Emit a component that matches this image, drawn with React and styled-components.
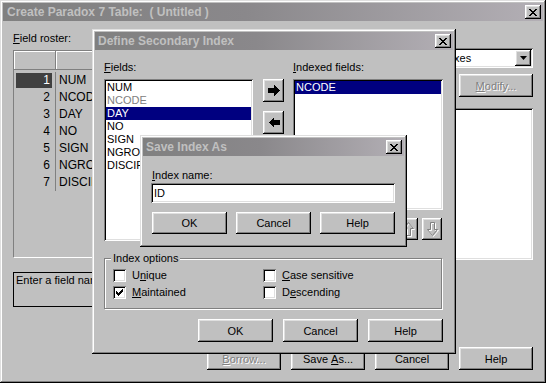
import React from "react";
import styled, { createGlobalStyle, css } from "styled-components";

const GlobalStyle = createGlobalStyle`
  html, body { margin: 0; padding: 0; background: #c0c0c0; }
  body {
    font-family: "Liberation Sans", Arial, sans-serif;
    font-size: 11px;
    color: #000;
  }
  *, *::before, *::after { box-sizing: border-box; }
`;

const frame = css`
  box-shadow: inset -1px -1px #000, inset 1px 1px #dfdfdf,
    inset -2px -2px #808080, inset 2px 2px #fff;
`;

const raised = css`
  box-shadow: inset -1px -1px #000, inset 1px 1px #fff,
    inset -2px -2px #808080, inset 2px 2px #dfdfdf;
`;

const sunken = css`
  box-shadow: inset 1px 1px #808080, inset -1px -1px #fff,
    inset 2px 2px #000, inset -2px -2px #dfdfdf;
`;

const Window = styled.div`
  position: ${({ $x }) => ($x === undefined ? "relative" : "absolute")};
  left: ${({ $x }) => $x ?? 0}px;
  top: ${({ $y }) => $y ?? 0}px;
  width: ${({ $w }) => $w}px;
  height: ${({ $h }) => $h}px;
  padding: 3px;
  display: flex;
  flex-direction: column;
  background: #c0c0c0;
  ${frame}
`;

const TitleBar = styled.div`
  flex: none;
  height: 18px;
  display: flex;
  align-items: center;
  padding: 0 2px 0 ${({ $pl }) => $pl ?? 3}px;
  background: linear-gradient(to right, #808080 0%, #8a888b 45%, #b3afb5 100%);
  color: #c0c0c0;
  font-size: 12px;
  font-weight: bold;
`;

const TitleText = styled.span`
  flex: 1;
  white-space: pre;
  overflow: hidden;
`;

const CloseButton = styled.div`
  width: 16px;
  height: 14px;
  display: flex;
  align-items: center;
  justify-content: center;
  background: #c0c0c0;
  ${raised}
`;

const Body = styled.div`
  flex: 1;
  display: flex;
  flex-direction: column;
  padding: ${({ $pad }) => $pad};
  min-height: 0;
`;

const Label = styled.div`
  height: 13px;
  line-height: 13px;
  white-space: nowrap;
  padding-left: ${({ $pl }) => $pl ?? 0}px;
`;

const ButtonFace = styled.div`
  flex: none;
  width: ${({ $w }) => $w ?? 75}px;
  height: ${({ $h }) => $h ?? 23}px;
  margin-top: ${({ $mt }) => $mt ?? 0}px;
  align-self: ${({ $end }) => ($end ? "flex-end" : "auto")};
  display: flex;
  align-items: center;
  justify-content: center;
  background: #c0c0c0;
  color: ${({ $disabled }) => ($disabled ? "#808080" : "#000")};
  text-shadow: ${({ $disabled }) => ($disabled ? "1px 1px 0 #fff" : "none")};
  white-space: pre;
  ${raised}
`;

const ButtonLabel = styled.span`
  display: flex;
  align-items: center;
`;

const Button = ({ children, ...rest }) => (
  <ButtonFace {...rest}>
    <ButtonLabel>{children}</ButtonLabel>
  </ButtonFace>
);

const ButtonRow = styled.div`
  display: flex;
  justify-content: ${({ $start }) => ($start ? "flex-start" : "flex-end")};
  gap: ${({ $gap }) => $gap ?? 10}px;
  margin-top: ${({ $mt }) => $mt ?? 0}px;
  padding: 0 ${({ $pr }) => $pr ?? 0}px 0 ${({ $pl }) => $pl ?? 0}px;
`;

const ListBox = styled.div`
  flex: none;
  height: ${({ $h }) => $h}px;
  margin-top: ${({ $mt }) => $mt ?? 5}px;
  padding: 2px;
  background: #fff;
  overflow: hidden;
  ${sunken}
`;

const ListItem = styled.div`
  height: 13px;
  line-height: 13px;
  padding-left: 1px;
  white-space: nowrap;
  background: ${({ $selected }) => ($selected ? "#000080" : "transparent")};
  color: ${({ $selected, $muted }) =>
    $selected ? "#fff" : $muted ? "#808080" : "#000"};
`;

/* outer window */

const OuterMain = styled.div`
  display: flex;
  gap: 21px;
`;

const Column = styled.div`
  width: ${({ $w }) => $w}px;
  display: flex;
  flex-direction: column;
`;

const FieldGrid = styled.div`
  margin-top: 5px;
  height: 208px;
  border-top: 1px solid #808080;
  border-left: 1px solid #808080;
  border-bottom: 1px solid #fff;
  display: flex;
  flex-direction: column;
  overflow: hidden;
`;

const GridHead = styled.div`
  flex: none;
  height: 19px;
  display: flex;
`;

const HeadCell = styled.div`
  flex: ${({ $w }) => ($w ? `0 0 ${$w}px` : 1)};
  border-right: 1px solid #808080;
  border-bottom: 1px solid #808080;
  box-shadow: inset 1px 1px #fff;
`;

const GridBody = styled.div`
  padding-top: 2px;
`;

const GridRow = styled.div`
  display: flex;
  height: 17px;
  font-size: 12px;
`;

const NumCol = styled.div`
  flex: 0 0 42px;
  border-right: 1px solid #808080;
  padding: 1px 0 1px 2px;
`;

const NumBox = styled.div`
  width: 36px;
  height: 15px;
  line-height: 15px;
  text-align: right;
  padding-right: 2px;
  background: ${({ $active }) => ($active ? "#404040" : "transparent")};
  color: ${({ $active }) => ($active ? "#fff" : "#000")};
`;

const NameCell = styled.div`
  padding-left: 3px;
  line-height: 17px;
  white-space: nowrap;
`;

const HintBox = styled.div`
  margin-top: 14px;
  height: 35px;
  border: 1px solid #000;
  padding: 1px 2px;
  line-height: 13px;
  white-space: nowrap;
  overflow: hidden;
`;

const Select = styled.div`
  margin-top: 16px;
  height: 20px;
  padding: 2px;
  display: flex;
  align-items: center;
  background: #fff;
  ${sunken}
`;

const SelectText = styled.span`
  flex: 1;
  padding-left: 1px;
  white-space: nowrap;
`;

const DropButton = styled.div`
  width: 16px;
  height: 16px;
  display: flex;
  align-items: center;
  justify-content: center;
  background: #c0c0c0;
  ${raised}
`;

const Footer = styled(ButtonRow)`
  margin-top: auto;
`;

/* define secondary index dialog */

const TopSection = styled.div`
  display: flex;
`;

const ArrowCol = styled.div`
  width: 21px;
  margin: 0 9px 0 10px;
  padding-top: 18px;
  display: flex;
  flex-direction: column;
  gap: 9px;
`;

const GroupBox = styled.div`
  position: relative;
  margin: 17px 1px 0 0;
  height: 51px;
  border: 1px solid #808080;
  box-shadow: inset 1px 1px #fff, 1px 1px #fff;
`;

const GroupLegend = styled.span`
  position: absolute;
  top: -7px;
  left: 6px;
  padding: 0 2px;
  line-height: 13px;
  background: #c0c0c0;
`;

const CheckGrid = styled.div`
  display: grid;
  grid-template-columns: 150px 1fr;
  grid-auto-rows: 13px;
  row-gap: 4px;
  padding: 10px 0 0 8px;
`;

const CheckRow = styled.div`
  display: flex;
  align-items: center;
  gap: 6px;
  line-height: 13px;
  white-space: nowrap;
`;

const CheckBox = styled.div`
  width: 13px;
  height: 13px;
  flex: none;
  display: flex;
  align-items: center;
  justify-content: center;
  background: #fff;
  ${sunken}
`;

const TextInput = styled.div`
  margin-top: 1px;
  height: 20px;
  padding: 2px 3px;
  line-height: 16px;
  background: #fff;
  ${sunken}
`;

const CloseGlyph = () => (
  <svg width="8" height="7" viewBox="0 0 8 7" shapeRendering="crispEdges">
    <path
      fill="#000"
      d="M0 0h2v1H0zM6 0h2v1H6zM1 1h2v1H1zM5 1h2v1H5zM2 2h4v1H2zM3 3h2v1H3zM2 4h4v1H2zM1 5h2v1H1zM5 5h2v1H5zM0 6h2v1H0zM6 6h2v1H6z"
    />
  </svg>
);

const CheckGlyph = () => (
  <svg width="7" height="7" viewBox="0 0 7 7" shapeRendering="crispEdges">
    <path
      fill="#000"
      d="M6 0h1v1H6zM5 1h2v1H5zM0 2h1v1H0zM4 2h3v1H4zM0 3h2v1H0zM3 3h3v1H3zM0 4h5v1H0zM1 5h3v1H1zM2 6h1v1H2z"
    />
  </svg>
);

const ArrowGlyph = ({ left }) => (
  <svg width="12" height="11" viewBox="0 0 12 11" shapeRendering="crispEdges">
    <path
      fill="#000"
      d={left ? "M12 3H6V0L0.5 5.5 6 11V8h6z" : "M0 3h6V0l5.5 5.5L6 11V8H0z"}
    />
  </svg>
);

const MoveGlyph = ({ up }) => {
  const d = up
    ? "M4.5 13.5v-7h-3l5-6 5 6h-3v7z"
    : "M4.5 0.5h4v7h3l-5 6-5-6h3z";
  return (
    <svg width="13" height="15" viewBox="0 0 13 15">
      <path d={d} fill="none" stroke="#fff" transform="translate(1 1)" />
      <path d={d} fill="none" stroke="#808080" />
    </svg>
  );
};

const DropGlyph = () => (
  <svg width="7" height="4" viewBox="0 0 7 4">
    <path d="M0 0h7L3.5 4z" fill="#000" />
  </svg>
);

const Title = ({ children, pl }) => (
  <TitleBar $pl={pl}>
    <TitleText>{children}</TitleText>
    <CloseButton>
      <CloseGlyph />
    </CloseButton>
  </TitleBar>
);

const rosterFields = ["NUM", "NCODE", "DAY", "NO", "SIGN", "NGROUP", "DISCIPLINE"];

const indexFields = [
  { name: "NUM" },
  { name: "NCODE", muted: true },
  { name: "DAY", selected: true },
  { name: "NO" },
  { name: "SIGN" },
  { name: "NGROUP" },
  { name: "DISCIPLINE" },
];

const Check = ({ checked, children }) => (
  <CheckRow>
    <CheckBox>{checked && <CheckGlyph />}</CheckBox>
    <span>{children}</span>
  </CheckRow>
);

const CreateTableWindow = ({ children }) => (
  <Window $w={546} $h={383}>
    <Title pl={4}>Create Paradox 7 Table:  ( Untitled )</Title>
    <Body $pad="11px 10px 10px 10px">
      <OuterMain>
        <Column $w={340}>
          <Label>
            <u>F</u>ield roster:
          </Label>
          <FieldGrid>
            <GridHead>
              <HeadCell $w={42} />
              <HeadCell />
            </GridHead>
            <GridBody>
              {rosterFields.map((name, i) => (
                <GridRow key={name}>
                  <NumCol>
                    <NumBox $active={i === 0}>{i + 1}</NumBox>
                  </NumCol>
                  <NameCell>{name}</NameCell>
                </GridRow>
              ))}
            </GridBody>
          </FieldGrid>
          <HintBox>Enter a field name</HintBox>
        </Column>
        <Column $w={159}>
          <Select>
            <SelectText>Secondary Indexes</SelectText>
            <DropButton>
              <DropGlyph />
            </DropButton>
          </Select>
          <Button $w={74} $disabled $end $mt={6}>
            <u>M</u>odify...
          </Button>
          <ListBox $h={152} $mt={11} />
        </Column>
      </OuterMain>
      <Footer>
        <Button $w={74} $disabled>
          <u>B</u>orrow...
        </Button>
        <Button $w={74}>
          {"Save "}
          <u>A</u>s...
        </Button>
        <Button $w={74}>Cancel</Button>
        <Button $w={74}>Help</Button>
      </Footer>
    </Body>
    {children}
  </Window>
);

const DefineIndexDialog = () => (
  <Window $x={92} $y={29} $w={364} $h={325}>
    <Title>Define Secondary Index</Title>
    <Body $pad="11px 10px 0 9px">
      <TopSection>
        <Column $w={149}>
          <Label>
            <u>F</u>ields:
          </Label>
          <ListBox $h={162}>
            {indexFields.map((f) => (
              <ListItem key={f.name} $selected={f.selected} $muted={f.muted}>
                {f.name}
              </ListItem>
            ))}
          </ListBox>
        </Column>
        <ArrowCol>
          <Button $w={21} $h={23}>
            <ArrowGlyph />
          </Button>
          <Button $w={21} $h={23}>
            <ArrowGlyph left />
          </Button>
        </ArrowCol>
        <Column $w={150}>
          <Label>
            <u>I</u>ndexed fields:
          </Label>
          <ListBox $h={131}>
            <ListItem $selected>NCODE</ListItem>
          </ListBox>
          <ButtonRow $gap={4} $mt={8} $pr={1}>
            <Button $w={20} $h={22}>
              <MoveGlyph up />
            </Button>
            <Button $w={20} $h={22}>
              <MoveGlyph />
            </Button>
          </ButtonRow>
        </Column>
      </TopSection>
      <GroupBox>
        <GroupLegend>Index options</GroupLegend>
        <CheckGrid>
          <Check>
            U<u>n</u>ique
          </Check>
          <Check>
            <u>C</u>ase sensitive
          </Check>
          <Check checked>
            <u>M</u>aintained
          </Check>
          <Check>
            D<u>e</u>scending
          </Check>
        </CheckGrid>
      </GroupBox>
      <ButtonRow $mt={10}>
        <Button>OK</Button>
        <Button>Cancel</Button>
        <Button>Help</Button>
      </ButtonRow>
    </Body>
  </Window>
);

const SaveIndexDialog = () => (
  <Window $x={140} $y={135} $w={267} $h={112}>
    <Title>Save Index As</Title>
    <Body $pad="13px 9px 0 8px">
      <Label $pl={1}>
        <u>I</u>ndex name:
      </Label>
      <TextInput>ID</TextInput>
      <ButtonRow $start $gap={9} $mt={9} $pl={1}>
        <Button $h={22}>OK</Button>
        <Button $h={22}>Cancel</Button>
        <Button $h={22}>Help</Button>
      </ButtonRow>
    </Body>
  </Window>
);

export default function App() {
  return (
    <>
      <GlobalStyle />
      <CreateTableWindow>
        <DefineIndexDialog />
        <SaveIndexDialog />
      </CreateTableWindow>
    </>
  );
}
